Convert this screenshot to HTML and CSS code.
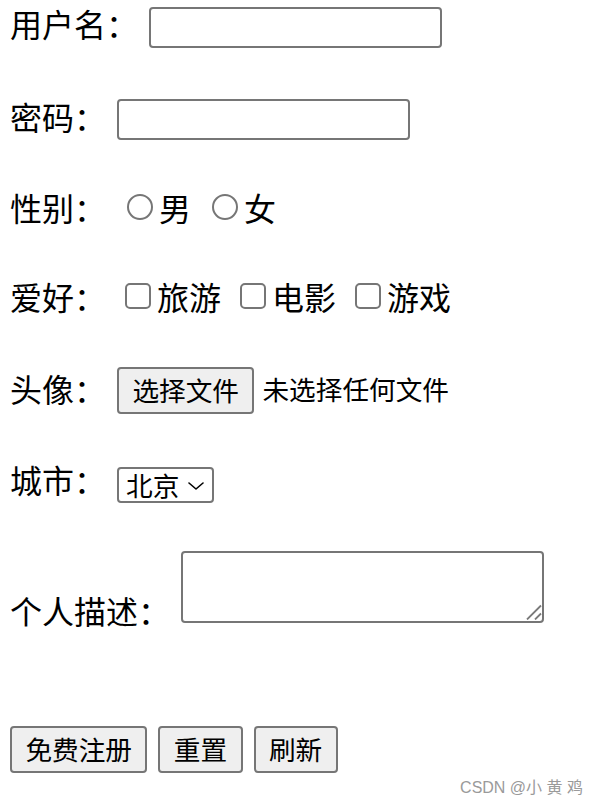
FILE: index.html
```html
<!DOCTYPE html>
<html lang="zh-CN">
<head>
<meta charset="utf-8">
<title>注册</title>
<link rel="stylesheet" href="styles.css">
</head>
<body>
<form class="form">
  <div class="row r1">
    <span class="lbl">用户名：</span>
    <input class="field" type="text">
  </div>
  <div class="row r2">
    <span class="lbl">密码：</span>
    <input class="field" type="password">
  </div>
  <div class="row r3">
    <span class="lbl">性别：</span>
    <label class="opt"><input class="radio" type="radio" name="sex">男</label>
    <label class="opt"><input class="radio" type="radio" name="sex">女</label>
  </div>
  <div class="row r4">
    <span class="lbl">爱好：</span>
    <label class="opt"><input class="check" type="checkbox">旅游</label>
    <label class="opt"><input class="check" type="checkbox">电影</label>
    <label class="opt"><input class="check" type="checkbox">游戏</label>
  </div>
  <div class="row r5">
    <span class="lbl">头像：</span>
    <button class="btn" type="button">选择文件</button>
    <span class="file-name">未选择任何文件</span>
  </div>
  <div class="row r6">
    <span class="lbl">城市：</span>
    <span class="select-box">
      <select class="city">
        <option>北京</option>
        <option>上海</option>
        <option>广州</option>
      </select>
      <svg class="chev" viewBox="0 0 16 8" aria-hidden="true"><path d="M1 1 L8 7 L15 1" fill="none" stroke="#000" stroke-width="1.6" stroke-linecap="round" stroke-linejoin="round"/></svg>
    </span>
  </div>
  <div class="row r7">
    <span class="lbl">个人描述：</span>
    <span class="area-box">
      <textarea class="desc"></textarea>
      <svg class="grip" viewBox="0 0 16 16" aria-hidden="true"><path d="M1 15.5 L15 1.5 M9 15.5 L15 9.5" fill="none" stroke="#7a7a7a" stroke-width="1.8"/></svg>
    </span>
  </div>
  <div class="row r8">
    <button class="btn" type="submit">免费注册</button>
    <button class="btn" type="reset">重置</button>
    <button class="btn" type="button">刷新</button>
  </div>
</form>
<div class="watermark">CSDN @小 黄 鸡</div>
</body>
</html>
```
FILE: styles.css
```css
html, body {
  margin: 0;
  padding: 0;
  background: #fff;
}

body {
  font-family: "Noto Sans CJK SC", "Noto Sans", sans-serif;
  color: #000;
  position: relative;
  height: 806px;
  overflow: hidden;
}

.form {
  zoom: 2;
  display: flex;
  flex-direction: column;
  padding-left: 5px;
}

.row {
  display: flex;
  align-items: center;
}

.lbl {
  font-size: 16px;
  line-height: 20px;
  margin-right: 5.5px;
  white-space: nowrap;
}

.r1 { margin-top: 3.5px; height: 20.5px; }
.r1 .lbl { margin-bottom: 4.3px; }

.r2 { margin-top: 25.5px; height: 20.5px; }
.r2 .lbl { margin-bottom: 3.8px; }

.r3 { margin-top: 23.6px; height: 20px; }
.r4 { margin-top: 24.5px; height: 20px; }

.r5 { margin-top: 25.4px; height: 23.5px; }
.r5 .lbl { margin-bottom: 2.3px; }

.r6 { margin-top: 26.5px; height: 18px; }
.r6 .lbl { margin-bottom: 5.8px; }

.r7 { margin-top: 24px; height: 36px; align-items: flex-end; }
.r7 .lbl { margin-bottom: -3.6px; }

.r8 { margin-top: 51.5px; height: 23.5px; gap: 5.5px; }

.field {
  box-sizing: border-box;
  width: 146.5px;
  height: 20.5px;
  margin: 0;
  padding: 1px 2px;
  border: 1px solid #767676;
  border-radius: 2px;
  font-family: inherit;
  font-size: 13.333px;
  background: #fff;
}

.opt {
  display: flex;
  align-items: center;
  font-size: 16px;
  line-height: 20px;
}

.opt + .opt {
  margin-left: 5.5px;
}

.radio {
  width: 13px;
  height: 13px;
  margin: 0 3px 0 5px;
}

.check {
  width: 13px;
  height: 13px;
  margin: 0 3px 0 4px;
}

.btn {
  box-sizing: border-box;
  height: 23.5px;
  margin: 0;
  padding: 0 6.7px;
  border: 1px solid #767676;
  border-radius: 2px;
  background: #efefef;
  color: #000;
  font-family: inherit;
  font-size: 13.333px;
  line-height: 19px;
}

.file-name {
  margin-left: 4px;
  margin-bottom: 1px;
  font-size: 13.333px;
  line-height: 19px;
}

.select-box {
  position: relative;
  display: flex;
  box-sizing: border-box;
  width: 48.5px;
  height: 18px;
  border: 1px solid #767676;
  border-radius: 2px;
  background: #fff;
}

.city {
  appearance: none;
  -webkit-appearance: none;
  box-sizing: border-box;
  width: 100%;
  height: 100%;
  margin: 0;
  padding: 0 0 0 3.5px;
  border: none;
  outline: none;
  background: transparent;
  color: #000;
  font-family: inherit;
  font-size: 13.333px;
  line-height: 16px;
}

.chev {
  position: absolute;
  right: 4px;
  top: 6.5px;
  width: 8px;
  height: 4px;
  pointer-events: none;
}

.area-box {
  position: relative;
  display: flex;
}

.desc {
  box-sizing: border-box;
  width: 181.5px;
  height: 36px;
  margin: 0;
  padding: 2px;
  border: 1px solid #767676;
  border-radius: 2px;
  font-family: inherit;
  font-size: 13.333px;
  resize: none;
}

.grip {
  position: absolute;
  right: 1px;
  bottom: 1.5px;
  width: 8px;
  height: 8px;
  pointer-events: none;
}

.watermark {
  position: absolute;
  right: 15px;
  top: 777px;
  font-family: "Liberation Sans", "Noto Sans CJK SC", sans-serif;
  font-size: 16px;
  line-height: 22px;
  color: #9a9a9a;
}
```
